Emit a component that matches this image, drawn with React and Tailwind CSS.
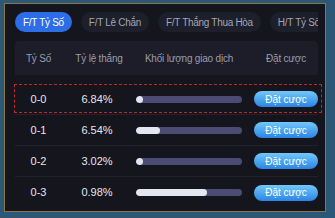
import React from "react";

const TABS = ["F/T Tỷ Số", "F/T Lê Chắn", "F/T Thắng Thua Hòa", "H/T Tỷ Số"];

const ROWS = [
  { score: "0-0", rate: "6.84%", vol: 7 },
  { score: "0-1", rate: "6.54%", vol: 24 },
  { score: "0-2", rate: "3.02%", vol: 7 },
  { score: "0-3", rate: "0.98%", vol: 71 },
];

export default function App() {
  return (
    <div className="w-[335px] h-[218px] bg-[#2a5876] pt-[3px] pl-[4px] overflow-hidden" style={{ fontFamily: "'Liberation Sans', Arial, sans-serif" }}>
      <div className="w-[322px] h-[209px] border border-[#8c7444] bg-[#14151d] pl-[10px] pt-2">
        {/* Tabs */}
        <div className="w-[303px] h-5 flex gap-[9px] overflow-hidden">
          {TABS.map((t, i) => (
            <div key={t} className={`shrink-0 h-5 px-[8px] rounded-full flex items-center text-[10px] tracking-[-0.3px] whitespace-nowrap ${i === 0 ? "bg-[#2d6de6] text-white" : "bg-[#1d1f2a] text-[#a3a6b4]"}`}>{t}</div>
          ))}
        </div>

        {/* Header */}
        <div className="mt-[9px] w-[303px] h-[34px] bg-[#1c1d29] rounded-t grid grid-cols-[47px_74px_118px_64px] items-center text-[10px] tracking-[-0.2px] text-[#9a9cab]">
          <div className="text-center">Tỷ Số</div>
          <div className="text-center">Tỷ lệ thắng</div>
          <div className="w-[106px] text-center">Khối lượng giao dịch</div>
          <div className="text-center">Đặt cược</div>
        </div>

        {/* Rows */}
        <div className="mt-[9px] w-[303px]">
          {ROWS.map((r, i) => (
            <div key={r.score} className={`relative h-[31px] grid grid-cols-[47px_74px_118px_64px] items-center text-[11px] text-[#e6e7ee] ${i < ROWS.length - 1 ? "border-b border-[#20212c]" : ""}`}>
              {i === 0 && <div className="absolute -left-px -right-[4px] top-0 bottom-px border border-dashed border-[#c0262c]" />}
              <div className="text-center">{r.score}</div>
              <div className="text-center pr-1">{r.rate}</div>
              <div className="w-[106px] h-[7px] rounded-full bg-[#4b4b74] overflow-hidden">
                <div className="h-full rounded-full bg-[#e4e7f2]" style={{ width: r.vol }} />
              </div>
              <div className="h-4 w-16 rounded-full bg-gradient-to-b from-[#72c8f8] to-[#2a84e4] flex items-center justify-center text-[10px] text-white">Đặt cược</div>
            </div>
          ))}
        </div>
      </div>
    </div>
  );
}
